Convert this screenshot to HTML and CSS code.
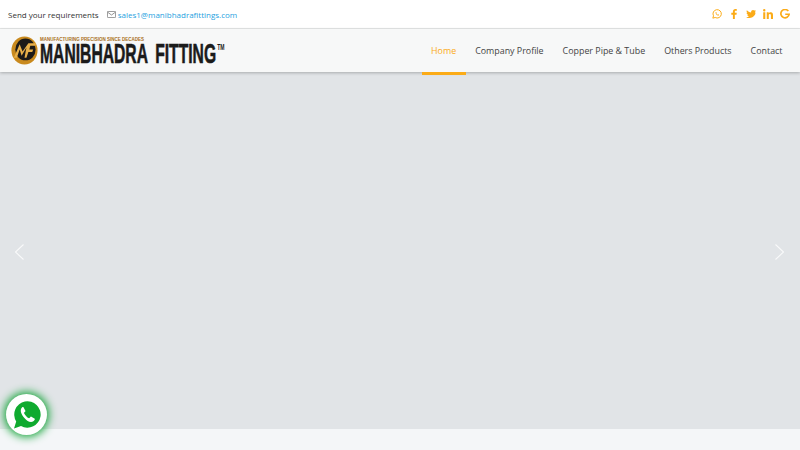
FILE: index.html
```html
<!DOCTYPE html>
<html lang="en">

<head>
    <meta charset="UTF-8">
    <meta name="viewport" content="width=device-width, initial-scale=1.0">
    <title>Manibhadra Fitting</title>
    <link rel="stylesheet" href="styles.css">
</head>

<body>
    <div class="topbar">
        <div class="contact-line">
            <span>Send your requirements</span>
            <svg class="mail-icon" width="9" height="7" viewBox="0 0 9 7" fill="none" stroke="#777" stroke-width="0.8">
                <rect x="0.4" y="0.4" width="8.2" height="6.2" rx="0.8"></rect>
                <path d="M0.6 1.2 L4.5 4 L8.4 1.2"></path>
            </svg>
            <a class="mail-link" href="#">sales1@manibhadrafittings.com</a>
        </div>
        <div class="socials">
            <svg width="10" height="10" viewBox="0 0 24 24" fill="none" stroke="#fbab17" stroke-width="2.4">
                <path d="M2 22 L3.6 16.4 A10 10 0 1 1 7.6 20.4 Z"></path>
                <path d="M8.5 7.5 C8 10 10.5 15 15.5 16 L17 14 L14.8 12.8 L13.8 13.6 C12.4 13 11 11.6 10.4 10.2 L11.2 9.2 L10 7 Z" fill="#fbab17" stroke="none"></path>
            </svg>
            <svg width="10" height="10" viewBox="0 0 24 24" fill="#fbab17">
                <path d="M14 24 V13.5 H18 L18.6 9 H14 V6.6 C14 5.3 14.5 4.4 16.2 4.4 H18.8 V0.4 C18 0.3 16.8 0 15.3 0 C11.8 0 9.4 2.1 9.4 6 V9 H5.5 V13.5 H9.4 V24 Z"></path>
            </svg>
            <svg width="10" height="10" viewBox="0 0 24 24" fill="#fbab17">
                <path d="M24 4.6 C23.1 5 22.2 5.3 21.2 5.4 C22.2 4.8 23 3.8 23.4 2.6 C22.4 3.2 21.4 3.6 20.3 3.8 C18.5 1.9 15.5 1.8 13.6 3.6 C12.3 4.8 11.8 6.6 12.2 8.3 C8.3 8.1 4.6 6.2 2.1 3.2 C0.8 5.4 1.5 8.3 3.6 9.7 C2.8 9.7 2.1 9.5 1.4 9.1 C1.4 11.4 3 13.5 5.3 14 C4.6 14.2 3.8 14.2 3.1 14.1 C3.7 16 5.5 17.4 7.6 17.4 C5.5 19 2.8 19.8 0 19.5 C7.2 24 16.6 21.8 21.1 14.6 C22.7 12.1 23.4 9.2 21.6 7.1 C22.6 6.4 23.4 5.6 24 4.6 Z"></path>
            </svg>
            <svg width="10" height="10" viewBox="0 0 24 24" fill="#fbab17">
                <path d="M0.5 8 H5.5 V24 H0.5 Z M3 0 A2.9 2.9 0 1 1 3 5.8 A2.9 2.9 0 1 1 3 0 Z M9 8 H13.7 V10.2 C14.4 8.9 16.1 7.6 18.6 7.6 C23.6 7.6 24 10.9 24 15.2 V24 H19 V16.2 C19 14.3 19 11.9 16.4 11.9 C13.8 11.9 13.9 14 13.9 16.1 V24 H9 Z"></path>
            </svg>
            <svg width="10" height="10" viewBox="0 0 24 24" fill="none" stroke="#fbab17" stroke-width="4">
                <path d="M20 5 A10 10 0 1 0 22 12.5 H12.5"></path>
            </svg>
        </div>
    </div>

    <div class="navbar">
        <a class="logo" href="#">
            <svg class="logo-mark" width="29" height="29" viewBox="0 0 30 28" preserveAspectRatio="none">
                <circle cx="15" cy="14" r="13.5" fill="#c98a1e"></circle>
                <circle cx="16" cy="13" r="10.5" fill="#1c1a18"></circle>
                <path d="M4 21 L10 8 L13 15 L19 7 L27 7 L26 9.5 L21 9.5 L20 13 L24 13 L23 15.5 L19 15.5 L17 21 L15 21 L17 11 L12 19 L10 13 L7 21 Z" fill="#e8b04a"></path>
            </svg>
            <span class="logo-words">
                <span class="logo-tag">MANUFACTURING PRECISION SINCE DECADES</span>
                <span class="logo-name">MANIBHADRA FITTING<sup class="logo-tm">TM</sup></span>
            </span>
        </a>
        <ul class="menu">
            <li><a class="menu-link active" href="#">Home</a></li>
            <li><a class="menu-link" href="#">Company Profile</a></li>
            <li><a class="menu-link" href="#">Copper Pipe &amp; Tube</a></li>
            <li><a class="menu-link" href="#">Others Products</a></li>
            <li><a class="menu-link" href="#">Contact</a></li>
        </ul>
    </div>

    <div class="hero">
        <svg width="12" height="18" viewBox="0 0 12 18" fill="none" stroke="#fff" stroke-width="1.1" opacity="0.8">
            <path d="M10.5 1.5 L2.5 9 L10.5 16.5"></path>
        </svg>
        <svg width="12" height="18" viewBox="0 0 12 18" fill="none" stroke="#fff" stroke-width="1.1" opacity="0.8">
            <path d="M1.5 1.5 L9.5 9 L1.5 16.5"></path>
        </svg>
    </div>

    <div class="page-bottom"></div>

    <a class="whatsapp" href="#">
        <svg width="30" height="30" viewBox="0 0 30 30">
            <path d="M2 28.5 L4.2 21.4 A13.2 13.2 0 1 1 9 26 Z" fill="#0faa2f"></path>
            <path d="M10 7.5 C8 9.5 8.5 13 11.5 17 C14.5 21 18.5 23 21 21.5 C22.5 20.5 23 19.3 22.8 18.7 L19 16.5 C18.5 16.5 17.5 18.3 17 18.3 C15 17.5 12.8 15 12 13 C12 12.5 13.5 11.5 13.5 11 L11.5 7.3 C11.2 7 10.5 7 10 7.5 Z" fill="#fff"></path>
        </svg>
    </a>
</body>

</html>
```

FILE: styles.css
```css
body {
    font-family: "Open Sans", Arial, sans-serif;
    font-size: 8.9px;
    margin: 0;
    height: 450px;
    overflow: hidden;
    background-color: #f4f6f8;
    color: #444;
    display: flex;
    flex-direction: column;
}

a {
    text-decoration: none;
}

.topbar {
    height: 28px;
    padding: 0 10px 0 8px;
    background-color: #fff;
    border-bottom: 1px solid #e6e8e8;
    display: flex;
    justify-content: space-between;
    align-items: center;
}

.contact-line {
    display: flex;
    align-items: center;
    color: #333;
    font-size: 8px;
}

.mail-icon {
    margin-left: 8px;
    margin-right: 2px;
}

.mail-link {
    color: #1f9fe0;
}

.socials {
    display: flex;
    gap: 7px;
    margin-bottom: 1px;
}

.navbar {
    height: 43px;
    padding: 0 8px;
    background-color: #f7f8f8;
    box-shadow: 0 1px 3px rgba(0, 0, 0, 0.25);
    display: flex;
    justify-content: space-between;
    position: relative;
    z-index: 1;
}

.logo {
    display: flex;
    align-items: center;
    gap: 1px;
    margin-left: 2px;
}

.logo-words {
    display: flex;
    flex-direction: column;
    white-space: nowrap;
}

.logo-tag {
    font-family: "Liberation Sans", Arial, sans-serif;
    font-size: 4.5px;
    font-weight: bold;
    color: #a9701b;
    line-height: 6px;
}

.logo-name {
    font-family: "Liberation Sans", Arial, sans-serif;
    font-size: 28px;
    font-weight: bold;
    line-height: 21px;
    color: #1b1b1b;
    display: inline-block;
    transform: scaleX(0.56);
    transform-origin: left center;
    width: 185px;
    word-spacing: 6px;
    -webkit-text-stroke: 0.6px #1b1b1b;
}

.logo-tm {
    font-size: 9px;
    line-height: 0;
    vertical-align: 13px;
    margin-left: 2px;
    -webkit-text-stroke: 0;
}

.menu {
    list-style: none;
    margin: 0;
    padding: 0;
    display: flex;
}

.menu-link {
    display: block;
    height: 43px;
    line-height: 44px;
    padding: 0 9.5px 3px;
    color: #444;
}

.menu-link.active {
    color: #fbab17;
    border-bottom: 3px solid #fbab17;
    padding-bottom: 0;
}

.hero {
    height: 357px;
    padding: 0 14px 0 13px;
    background-color: #e1e4e7;
    display: flex;
    justify-content: space-between;
    align-items: center;
}

.hero svg {
    margin-top: 2px;
}

.page-bottom {
    flex: 1;
}

.whatsapp {
    position: absolute;
    left: 6px;
    top: 394px;
    width: 41px;
    height: 41px;
    border-radius: 50%;
    background-color: #fff;
    box-shadow: 0 0 8px 2px #16a53a;
    display: flex;
    align-items: center;
    justify-content: center;
}
```
